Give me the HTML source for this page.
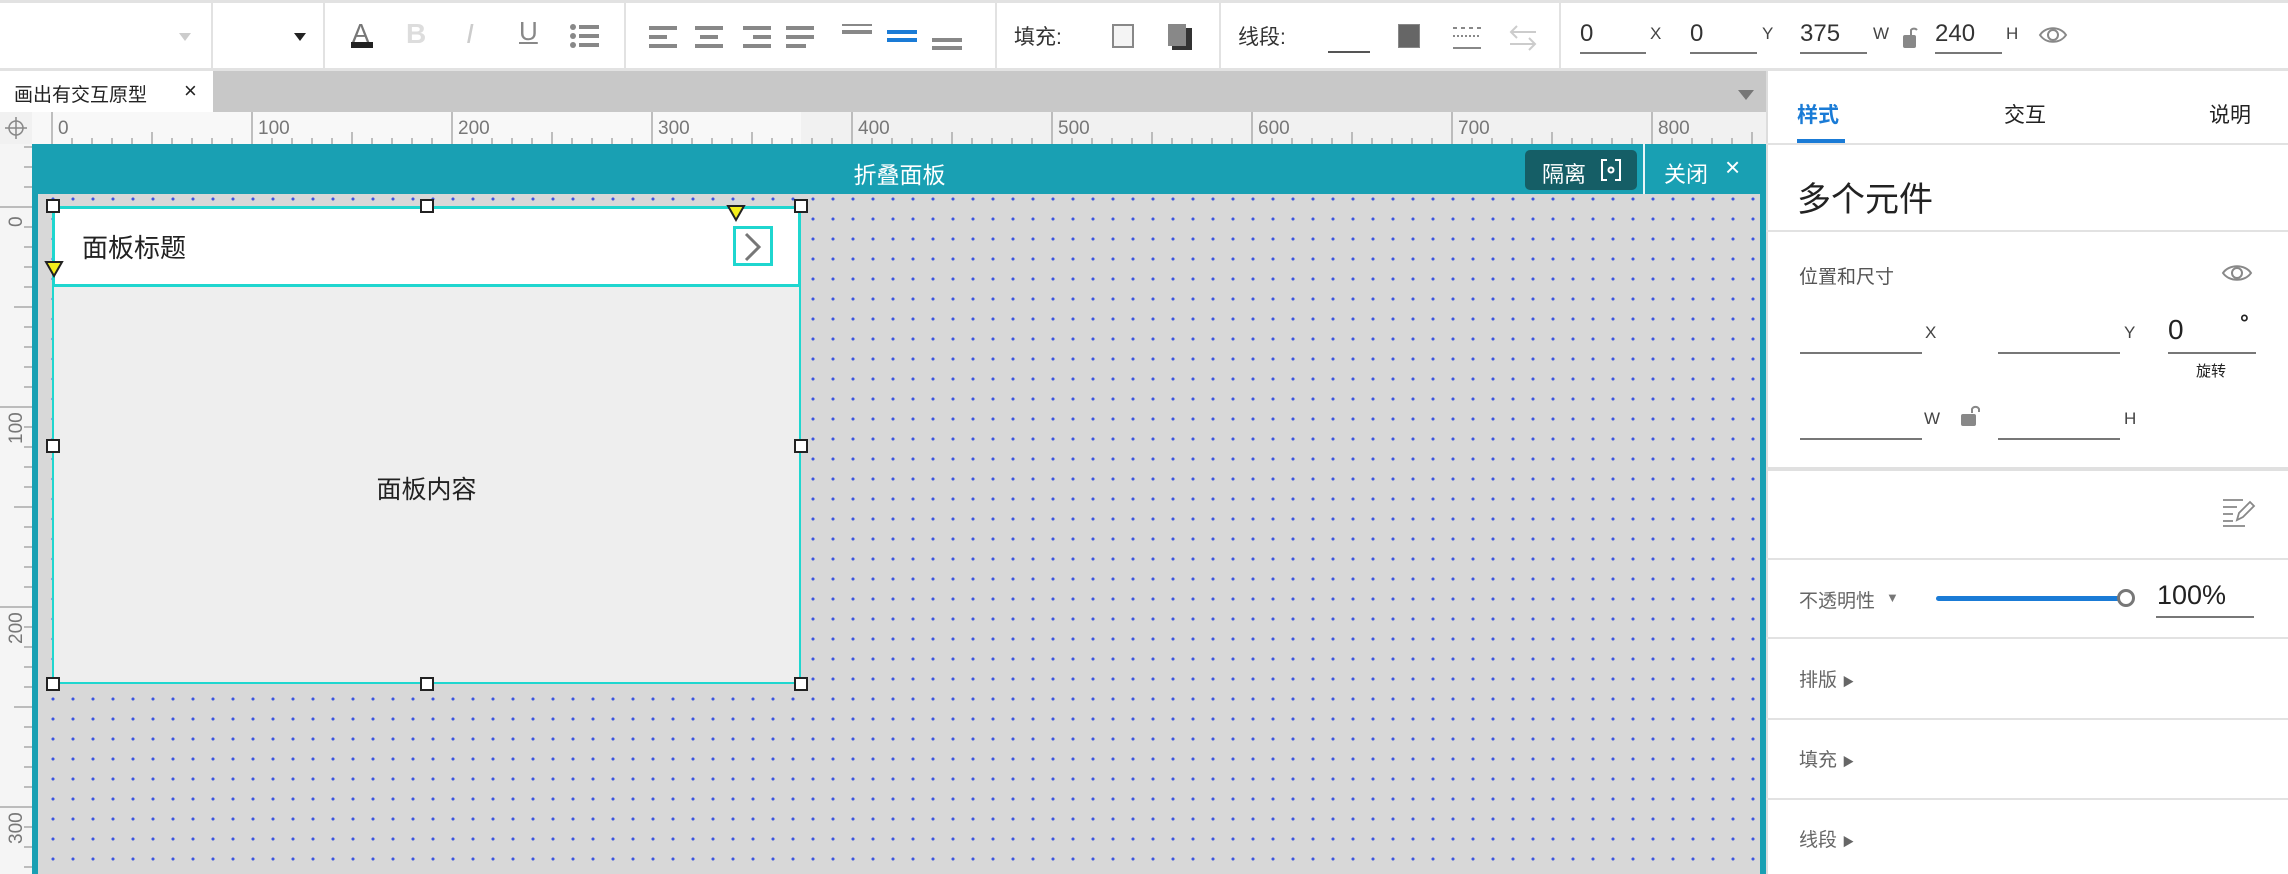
<!DOCTYPE html>
<html><head><meta charset="utf-8">
<style>
*{margin:0;padding:0;box-sizing:border-box}
body{width:2288px;height:874px;overflow:hidden;background:#fff;font-family:"Liberation Sans","Noto Sans CJK SC",sans-serif;position:relative;color:#333}
.a{position:absolute}
.vd{position:absolute;top:0;width:2px;height:70px;background:#e2e2e2}
.tb{font-size:21px;color:#333}
.ul{position:absolute;height:2px;background:#777}
.lbl{position:absolute;font-size:17px;color:#444}
.hl{position:absolute;left:1766px;width:522px;height:2px;background:#e2e2e2}
.sec{position:absolute;left:1799px;font-size:19px;color:#666}
.h{position:absolute;width:14px;height:14px;border:2px solid #222;background:#fff}
</style></head><body>

<!-- toolbar -->
<div class="a" style="left:0;top:0;width:2288px;height:3px;background:#e2e2e2"></div>
<div class="a" style="left:0;top:68px;width:2288px;height:3px;background:#e2e2e2"></div>
<div class="vd" style="left:211px"></div>
<div class="vd" style="left:323px"></div>
<div class="vd" style="left:624px"></div>
<div class="vd" style="left:995px"></div>
<div class="vd" style="left:1219px"></div>
<div class="vd" style="left:1559px"></div>
<div class="a" style="left:179px;top:33px;border:6px solid transparent;border-top:8px solid #ccc"></div>
<div class="a" style="left:294px;top:33px;border:6px solid transparent;border-top:8px solid #222"></div>
<div class="a tb" style="left:352px;top:18px;font-size:26px;color:#777">A</div>
<div class="a" style="left:351px;top:42px;width:22px;height:6px;background:#222"></div>
<div class="a tb" style="left:406px;top:18px;font-size:28px;font-weight:bold;color:#ddd">B</div>
<div class="a tb" style="left:466px;top:18px;font-size:28px;font-style:italic;color:#ccc">I</div>
<div class="a tb" style="left:519px;top:16px;font-size:26px;color:#888;text-decoration:underline">U</div>
<svg class="a" style="left:570px;top:24px" width="30" height="24"><g fill="#888"><circle cx="3" cy="3" r="3"/><circle cx="3" cy="12" r="3"/><circle cx="3" cy="21" r="3"/><rect x="9" y="1" width="20" height="4"/><rect x="9" y="10" width="20" height="4"/><rect x="9" y="19" width="20" height="4"/></g></svg>
<svg class="a" style="left:649px;top:24px" width="330" height="30"><g fill="#888">
<rect x="0" y="2" width="28" height="4"/><rect x="0" y="11" width="18" height="4"/><rect x="0" y="20" width="28" height="4"/>
<rect x="46" y="2" width="28" height="4"/><rect x="51" y="11" width="18" height="4"/><rect x="46" y="20" width="28" height="4"/>
<rect x="94" y="2" width="28" height="4"/><rect x="104" y="11" width="18" height="4"/><rect x="94" y="20" width="28" height="4"/>
<rect x="137" y="2" width="28" height="4"/><rect x="137" y="11" width="28" height="4"/><rect x="137" y="20" width="20" height="4"/>
<rect x="193" y="-2" width="30" height="4"/><rect x="193" y="6" width="30" height="4"/>
<rect x="283" y="14" width="30" height="4"/><rect x="283" y="22" width="30" height="4"/></g>
<g fill="#1a7bd6"><rect x="238" y="6" width="30" height="4"/><rect x="238" y="14" width="30" height="4"/></g></svg>
<div class="a tb" style="left:1014px;top:21px">填充:</div>
<div class="a" style="left:1112px;top:24px;width:22px;height:24px;border:2px solid #888;background:#f4f4f4"></div>
<div class="a" style="left:1172px;top:28px;width:20px;height:22px;background:#333"></div>
<div class="a" style="left:1168px;top:24px;width:18px;height:22px;background:#888"></div>
<div class="a tb" style="left:1238px;top:21px">线段:</div>
<div class="a" style="left:1328px;top:51px;width:42px;height:2px;background:#555"></div>
<div class="a" style="left:1398px;top:24px;width:22px;height:24px;background:#666;border:1px solid #888"></div>
<svg class="a" style="left:1452px;top:26px" width="30" height="26"><g stroke="#888" stroke-width="2"><path d="M1 2h4M9 2h4M17 2h4M25 2h4" /><path d="M1 10h2M5 10h2M9 10h2M13 10h2M17 10h2M21 10h2M25 10h2"/><path d="M1 22h28"/></g></svg>
<svg class="a" style="left:1508px;top:24px" width="30" height="28" fill="none" stroke="#ccc" stroke-width="2"><path d="M28 8H3M9 2L3 8l6 6M2 20h25M21 14l6 6-6 6"/></svg>
<div class="a tb" style="left:1580px;top:20px;font-size:24px">0</div><div class="ul" style="left:1580px;top:52px;width:66px"></div><div class="lbl" style="left:1650px;top:24px">X</div>
<div class="a tb" style="left:1690px;top:20px;font-size:24px">0</div><div class="ul" style="left:1690px;top:52px;width:67px"></div><div class="lbl" style="left:1762px;top:24px">Y</div>
<div class="a tb" style="left:1800px;top:20px;font-size:24px">375</div><div class="ul" style="left:1800px;top:52px;width:67px"></div><div class="lbl" style="left:1873px;top:24px">W</div>
<svg class="a" style="left:1902px;top:24px" width="16" height="26"><path d="M9 11V6a4 4 0 0 1 6 0" fill="none" stroke="#888" stroke-width="2"/><rect x="1" y="11" width="13" height="13" rx="2" fill="#888"/></svg>
<div class="a tb" style="left:1935px;top:20px;font-size:24px">240</div><div class="ul" style="left:1935px;top:52px;width:67px"></div><div class="lbl" style="left:2006px;top:24px">H</div>
<svg class="a" style="left:2038px;top:23px" width="30" height="24" fill="none" stroke="#888" stroke-width="2"><path d="M2 12C8 3 22 3 28 12C22 21 8 21 2 12Z"/><circle cx="15" cy="12" r="5"/></svg>

<!-- tab bar -->
<div class="a" style="left:0;top:71px;width:1766px;height:41px;background:#c8c8c8"></div>
<div class="a" style="left:0;top:71px;width:213px;height:41px;background:#fff"></div>
<div class="a" style="left:14px;top:80px;font-size:19px;color:#222">画出有交互原型</div>
<div class="a" style="left:184px;top:78px;font-size:22px;color:#222">×</div>
<div class="a" style="left:1738px;top:90px;border:8px solid transparent;border-top:10px solid #777"></div>

<!-- rulers -->
<div class="a" style="left:0;top:112px;width:1766px;height:32px;background:#f1f1f1"></div>
<div class="a" style="left:32px;top:112px;width:769px;height:32px;background:#f8f8f8"></div>
<div class="a" style="left:0;top:144px;width:32px;height:730px;background:#f5f5f5"></div>
<div class="a" style="left:0;top:110px;width:2px;"></div>
<svg class="a" style="left:4px;top:116px" width="24" height="24" fill="none" stroke="#888" stroke-width="1.5"><circle cx="12" cy="12" r="7"/><path d="M12 1v22M1 12h22"/></svg>
<svg class="a" style="left:32px;top:112px" width="1734" height="32">
<g stroke="#999" stroke-width="1.5" id="hr"></g>
<g font-family="Liberation Sans,sans-serif" font-size="19" fill="#777">
<text x="26" y="22">0</text><text x="226" y="22">100</text><text x="426" y="22">200</text><text x="626" y="22">300</text><text x="826" y="22">400</text><text x="1026" y="22">500</text><text x="1226" y="22">600</text><text x="1426" y="22">700</text><text x="1626" y="22">800</text></g>
<path stroke="#aaa" stroke-width="1.5" d="M20 0v32M220 0v32M420 0v32M620 0v32M820 0v32M1020 0v32M1220 0v32M1420 0v32M1620 0v32
M40 26v6M60 26v6M80 26v6M100 26v6M120 20v12M140 26v6M160 26v6M180 26v6M200 26v6
M240 26v6M260 26v6M280 26v6M300 26v6M320 20v12M340 26v6M360 26v6M380 26v6M400 26v6
M440 26v6M460 26v6M480 26v6M500 26v6M520 20v12M540 26v6M560 26v6M580 26v6M600 26v6
M640 26v6M660 26v6M680 26v6M700 26v6M720 20v12M740 26v6M760 26v6M780 26v6M800 26v6
M840 26v6M860 26v6M880 26v6M900 26v6M920 20v12M940 26v6M960 26v6M980 26v6M1000 26v6
M1040 26v6M1060 26v6M1080 26v6M1100 26v6M1120 20v12M1140 26v6M1160 26v6M1180 26v6M1200 26v6
M1240 26v6M1260 26v6M1280 26v6M1300 26v6M1320 20v12M1340 26v6M1360 26v6M1380 26v6M1400 26v6
M1440 26v6M1460 26v6M1480 26v6M1500 26v6M1520 20v12M1540 26v6M1560 26v6M1580 26v6M1600 26v6
M1640 26v6M1660 26v6M1680 26v6M1700 26v6M1720 20v12"/>
</svg>
<svg class="a" style="left:0;top:144px" width="32" height="730">
<path stroke="#aaa" stroke-width="1.5" d="M0 63h32M0 263h32M0 463h32M0 663h32
M24 3h8M24 23h8M24 43h8M24 83h8M24 103h8M24 123h8M24 143h8M14 163h18M24 183h8M24 203h8M24 223h8M24 243h8
M24 283h8M24 303h8M24 323h8M24 343h8M14 363h18M24 383h8M24 403h8M24 423h8M24 443h8
M24 483h8M24 503h8M24 523h8M24 543h8M14 563h18M24 583h8M24 603h8M24 623h8M24 643h8M24 683h8M24 703h8M24 723h8"/>
<g font-family="Liberation Sans,sans-serif" font-size="19" fill="#777">
<text transform="translate(22,83) rotate(-90)">0</text>
<text transform="translate(22,300) rotate(-90)">100</text>
<text transform="translate(22,500) rotate(-90)">200</text>
<text transform="translate(22,700) rotate(-90)">300</text></g></svg>

<!-- canvas frame -->
<div class="a" style="left:32px;top:144px;width:1734px;height:730px;background:#19a0b3"></div>
<div class="a" style="left:38px;top:194px;width:1722px;height:680px;background-color:#d8d8d8;background-image:radial-gradient(circle,#3d55e0 1.3px,transparent 1.8px);background-size:20px 20px;background-position:5px 15px"></div>
<div class="a" style="left:0;top:156px;width:1799px;text-align:center;font-size:23px;color:#fff">折叠面板</div>
<div class="a" style="left:1525px;top:150px;width:112px;height:40px;background:#155e66;border-radius:5px"></div>
<div class="a" style="left:1542px;top:157px;font-size:22px;color:#fff">隔离</div>
<svg class="a" style="left:1601px;top:159px" width="20" height="22" fill="none" stroke="#fff" stroke-width="2"><path d="M6 1H1v20h5M14 1h5v20h-5"/><circle cx="10" cy="11" r="2.5"/></svg>
<div class="a" style="left:1643px;top:144px;width:2px;height:50px;background:#e8f6f8"></div>
<div class="a" style="left:1664px;top:157px;font-size:22px;color:#fff">关闭</div>
<div class="a" style="left:1725px;top:152px;font-size:26px;color:#fff">×</div>

<!-- widget -->
<div class="a" style="left:52px;top:206px;width:749px;height:478px;background:#eeeeee;border:2px solid #1fd6cf"></div>
<div class="a" style="left:52px;top:206px;width:749px;height:81px;background:#fff;border:3px solid #1fd6cf;border-bottom-width:3px"></div>
<div class="a" style="left:82px;top:228px;font-size:26px;color:#222">面板标题</div>
<div class="a" style="left:733px;top:226px;width:40px;height:40px;border:3px solid #1fd6cf;background:#fff"></div>
<svg class="a" style="left:741px;top:231px" width="24" height="32" fill="none" stroke="#777" stroke-width="3"><path d="M5 3l13 13-13 13"/></svg>
<div class="a" style="left:52px;top:470px;width:749px;text-align:center;font-size:25px;color:#222">面板内容</div>
<div class="h" style="left:46px;top:199px"></div>
<div class="h" style="left:420px;top:199px"></div>
<div class="h" style="left:794px;top:199px"></div>
<div class="h" style="left:46px;top:439px"></div>
<div class="h" style="left:794px;top:439px"></div>
<div class="h" style="left:46px;top:677px"></div>
<div class="h" style="left:420px;top:677px"></div>
<div class="h" style="left:794px;top:677px"></div>
<svg class="a" style="left:44px;top:259px" width="20" height="20"><path d="M2 3h16L10 17Z" fill="#f5ee1c" stroke="#222" stroke-width="2"/></svg>
<svg class="a" style="left:726px;top:203px" width="20" height="20"><path d="M2 3h16L10 17Z" fill="#f5ee1c" stroke="#222" stroke-width="2"/></svg>

<!-- right panel -->
<div class="a" style="left:1766px;top:71px;width:522px;height:803px;background:#fff;border-left:2px solid #ddd"></div>
<div class="a" style="left:1797px;top:99px;font-size:21px;color:#1a7bd6;font-weight:bold">样式</div>
<div class="a" style="left:2004px;top:99px;font-size:21px;color:#222">交互</div>
<div class="a" style="left:2209px;top:99px;font-size:21px;color:#222">说明</div>
<div class="a" style="left:1797px;top:139px;width:48px;height:5px;background:#1a7bd6"></div>
<div class="hl" style="top:143px"></div>
<div class="a" style="left:1797px;top:172px;font-size:34px;color:#222">多个元件</div>
<div class="hl" style="top:230px"></div>
<div class="sec" style="top:262px;color:#555">位置和尺寸</div>
<svg class="a" style="left:2221px;top:262px" width="32" height="22" fill="none" stroke="#888" stroke-width="2"><path d="M2 11C8 2 24 2 30 11C24 20 8 20 2 11Z"/><circle cx="16" cy="11" r="5"/></svg>
<div class="ul" style="left:1800px;top:352px;width:122px"></div><div class="lbl" style="left:1925px;top:323px">X</div>
<div class="ul" style="left:1998px;top:352px;width:122px"></div><div class="lbl" style="left:2124px;top:323px">Y</div>
<div class="a" style="left:2168px;top:314px;font-size:28px;color:#222">0</div>
<div class="a" style="left:2240px;top:310px;font-size:22px;color:#222;font-weight:bold">°</div>
<div class="ul" style="left:2168px;top:352px;width:88px"></div>
<div class="a" style="left:2196px;top:360px;font-size:15px;color:#222">旋转</div>
<div class="ul" style="left:1800px;top:438px;width:122px"></div><div class="lbl" style="left:1924px;top:409px">W</div>
<svg class="a" style="left:1960px;top:403px" width="22" height="25"><path d="M12 10V6a4 4 0 0 1 7 0v3" fill="none" stroke="#888" stroke-width="2"/><rect x="1" y="11" width="15" height="12" rx="2" fill="#888"/></svg>
<div class="ul" style="left:1998px;top:438px;width:122px"></div><div class="lbl" style="left:2124px;top:409px">H</div>
<div class="a" style="left:1768px;top:467px;width:520px;height:4px;background:#e0e0e0"></div>
<svg class="a" style="left:2222px;top:498px" width="34" height="30" fill="none" stroke="#888" stroke-width="1.8"><path d="M1 2h20M1 9h14M1 16h10M1 23h10M1 28h22"/><path d="M15 22l2-7L28 4l4 4-11 11z"/></svg>
<div class="hl" style="top:558px"></div>
<div class="sec" style="top:586px">不透明性</div>
<div class="a" style="left:1886px;top:590px;font-size:13px;color:#777">▼</div>
<div class="a" style="left:1936px;top:596px;width:188px;height:5px;background:#1a7bd6;border-radius:3px"></div>
<div class="a" style="left:2117px;top:589px;width:18px;height:18px;border:3px solid #777;border-radius:50%;background:#fff"></div>
<div class="a" style="left:2157px;top:580px;font-size:27px;color:#222">100%</div>
<div class="ul" style="left:2156px;top:616px;width:98px"></div>
<div class="hl" style="top:637px"></div>
<div class="sec" style="top:665px">排版 <span style="font-size:12px">▶</span></div>
<div class="hl" style="top:718px"></div>
<div class="sec" style="top:745px">填充 <span style="font-size:12px">▶</span></div>
<div class="hl" style="top:798px"></div>
<div class="sec" style="top:825px">线段 <span style="font-size:12px">▶</span></div>
</body></html>
